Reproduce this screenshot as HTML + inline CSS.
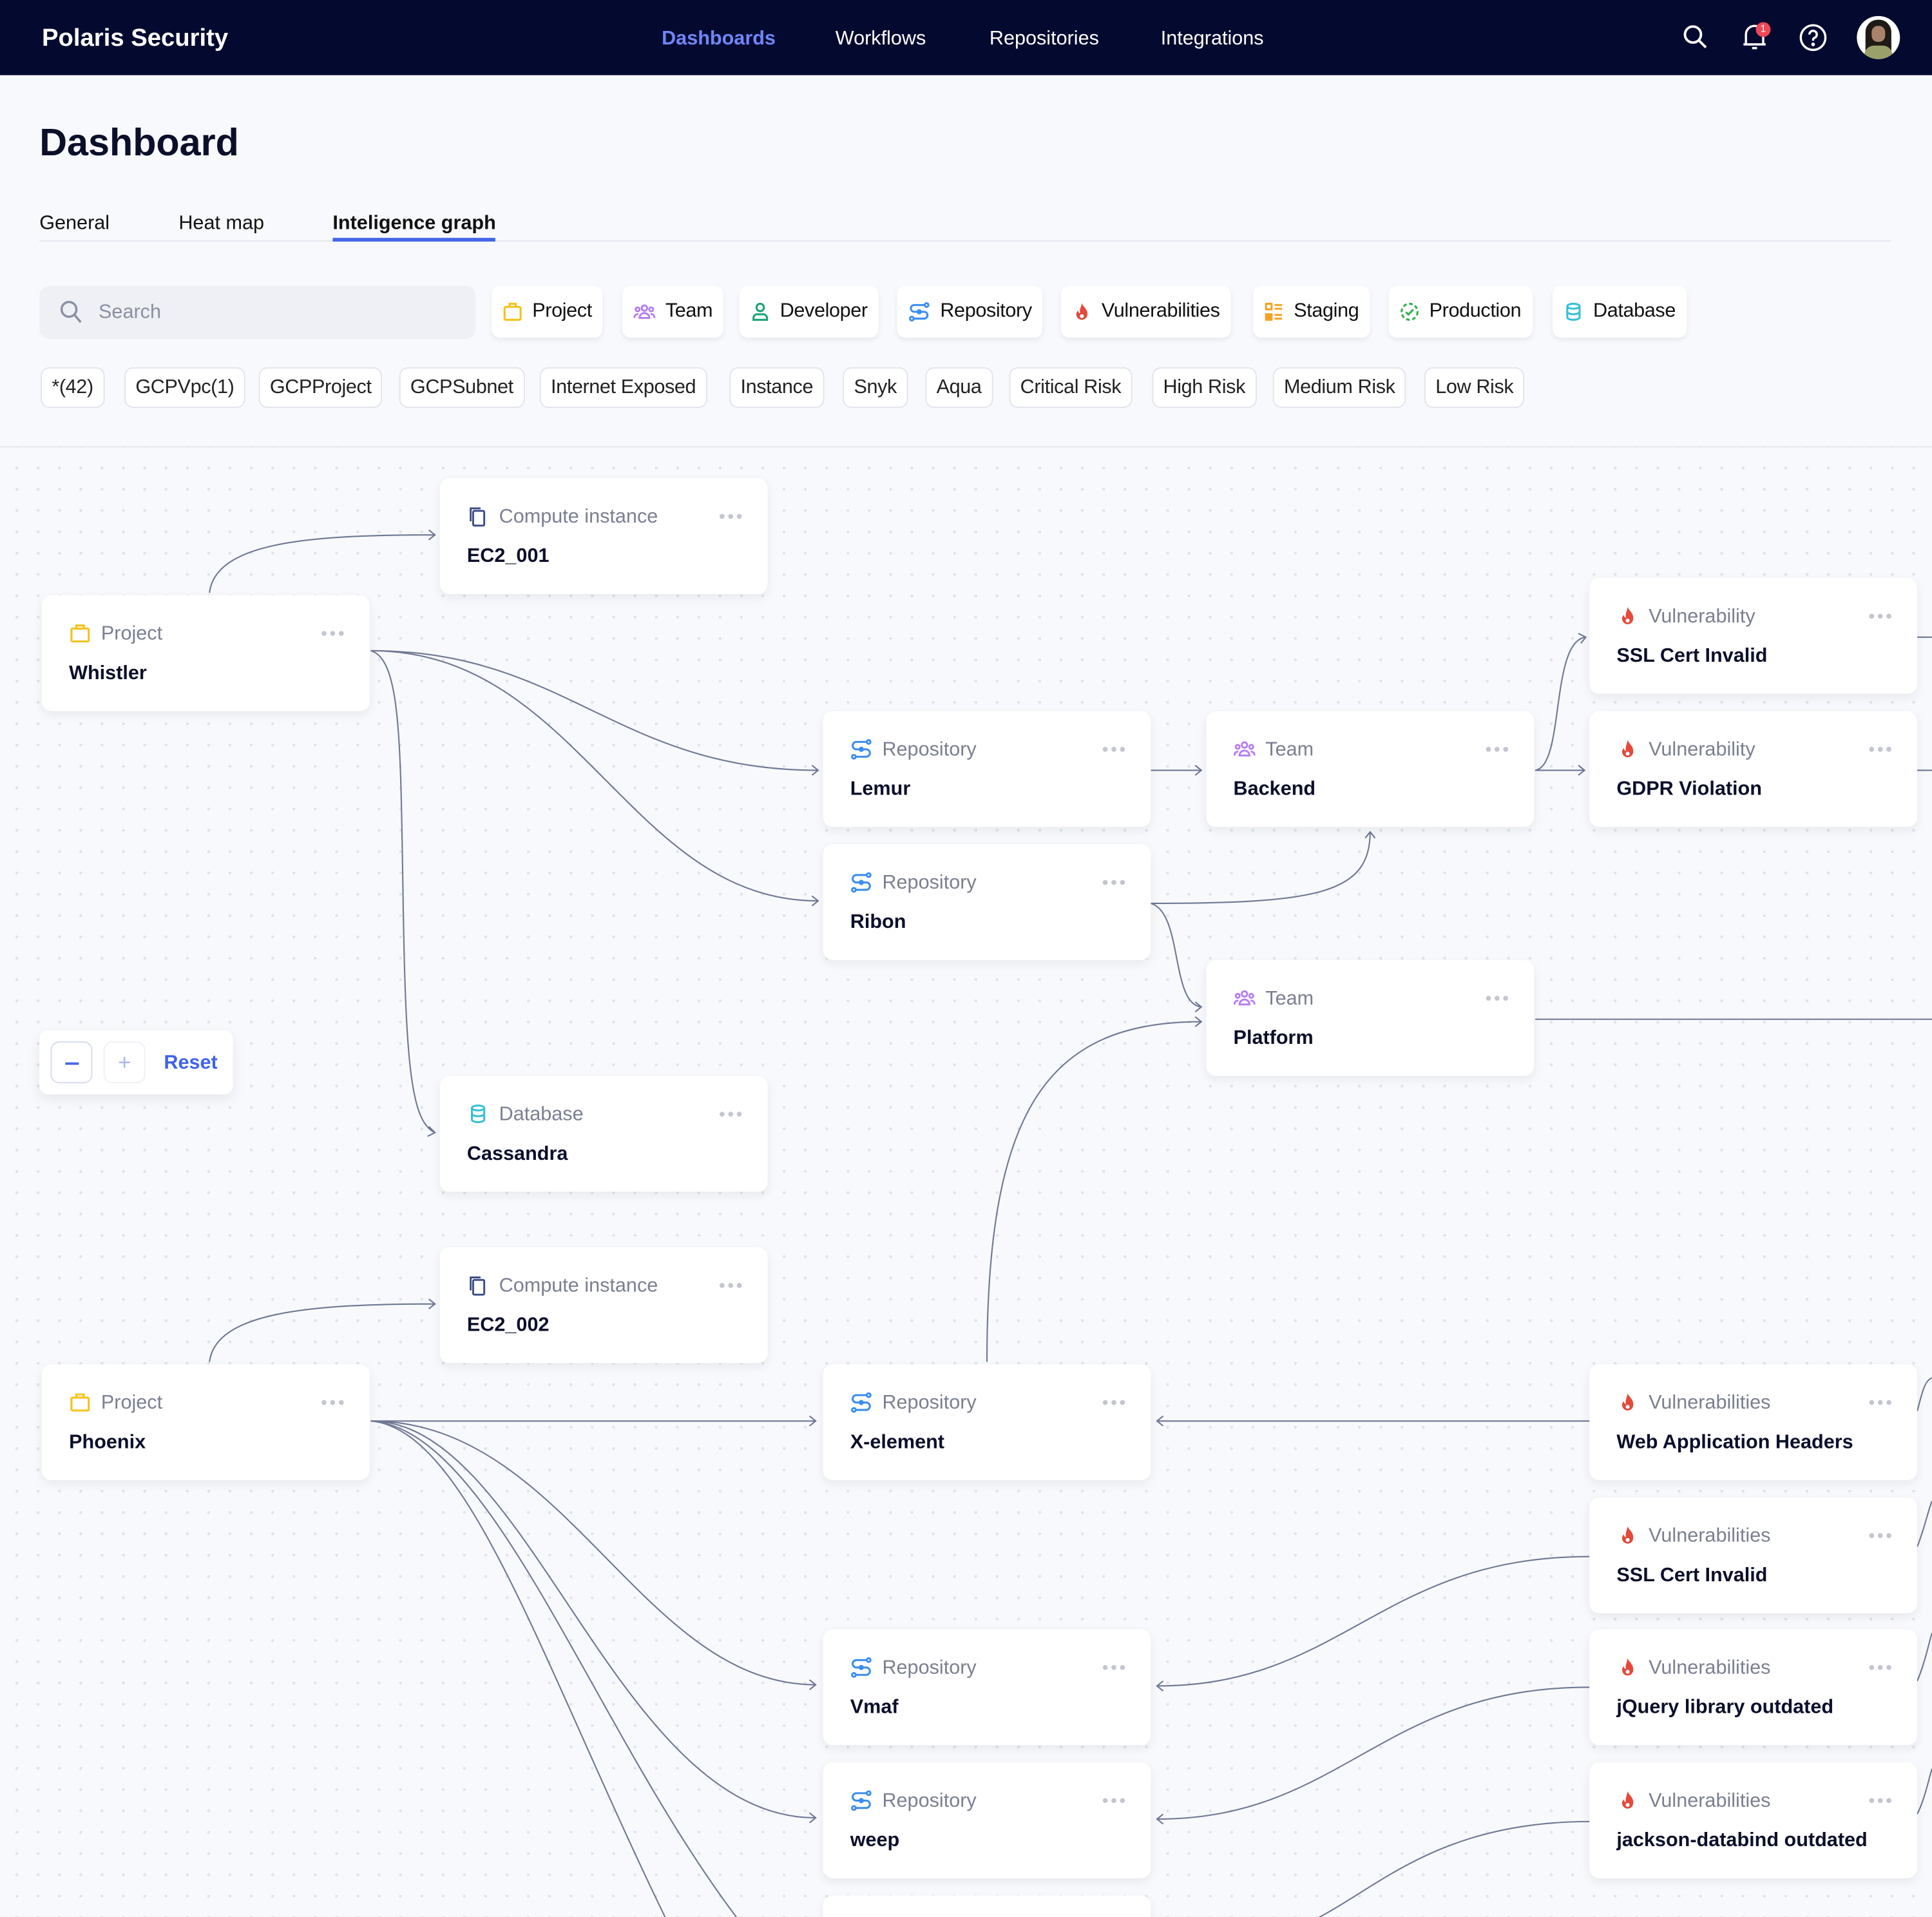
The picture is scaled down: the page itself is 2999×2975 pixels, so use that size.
<!DOCTYPE html>
<html><head><meta charset="utf-8">
<style>
*{box-sizing:border-box;margin:0;padding:0}
html,body{width:2999px;height:2975px;overflow:hidden;background:#f8f9fc}
#w{width:1568px;height:1556px;transform:scale(1.91263);transform-origin:0 0;position:relative;font-family:"Liberation Sans",sans-serif;color:#0b0f2a;overflow:hidden;background:#f8f9fc}
.top{position:absolute;left:0;top:0;width:1568px;height:61px;background:#040a2f}
.logo{position:absolute;left:34px;top:20px;color:#fff;font-weight:bold;font-size:20px}
.nav{position:absolute;top:23px;color:#fff;font-size:16px}
h1{position:absolute;left:32px;top:98px;font-size:31px;font-weight:bold;color:#0b0f2a}
.tab{position:absolute;top:173px;font-size:16px;color:#111}
.tabline{position:absolute;left:32px;top:195px;width:1503px;height:1px;background:#e3e5ee}
.chip{position:absolute;top:232px;height:42px;background:#fff;border-radius:7px;box-shadow:0 2px 4px rgba(20,30,60,.07);font-size:16px;display:flex;align-items:center;padding:0 9px;gap:8px;color:#111;letter-spacing:-0.2px}
.tag{position:absolute;top:298px;height:33px;background:#fff;border:1px solid #e2e4ee;border-radius:7px;font-size:16px;display:flex;align-items:center;padding:0 8px;color:#222;letter-spacing:-0.2px}
.search{position:absolute;left:32px;top:232px;width:354px;height:43px;background:#eff0f5;border-radius:8px}
.canvas{position:absolute;left:0;top:362px;width:1568px;height:1194px;border-top:1px solid #e6e8ef;background-color:#f8f9fc;background-image:radial-gradient(circle,#dfe2ea 1px,transparent 1.3px);background-size:17.3px 17.3px;background-position:5px 8px}
.card{position:absolute;width:266px;height:94px;background:#fff;border-radius:8px;box-shadow:0 3px 8px rgba(20,30,60,.07)}
.card .l{position:absolute;left:48px;top:23px;font-size:16px;color:#7b7f91}
.card .n{position:absolute;left:22px;top:55px;font-size:16px;font-weight:bold;color:#0b0f2a}
.card .ic{position:absolute;left:22px;top:22px;width:18px;height:18px}
.card .d{position:absolute;left:226px;top:28px;width:20px;height:6px}
svg{overflow:visible}
</style></head><body><div id="w">
<div class="top">
<div class="logo">Polaris Security</div>
<div class="nav" style="left:537px;color:#6f86f7;font-weight:bold">Dashboards</div>
<div class="nav" style="left:678px">Workflows</div>
<div class="nav" style="left:803px">Repositories</div>
<div class="nav" style="left:942px">Integrations</div>
<svg style="position:absolute;left:1365px;top:19px" width="22" height="22" viewBox="0 0 22 22" fill="none" stroke="#fff" stroke-width="2"><circle cx="9" cy="9" r="6.5"/><path d="M14 14l5.5 5.5"/></svg>
<svg style="position:absolute;left:1413px;top:18px" width="22" height="24" viewBox="0 0 22 24" fill="none" stroke="#fff" stroke-width="1.8"><path d="M4 18V10a7 7 0 0 1 14 0v8zM2 18h18M9 21h4"/></svg>
<div style="position:absolute;left:1425px;top:18px;width:12px;height:12px;border-radius:6px;background:#f04758;color:#fff;font-size:8px;text-align:center;line-height:12px">1</div>
<svg style="position:absolute;left:1460px;top:19px" width="23" height="23" viewBox="0 0 23 23" fill="none" stroke="#fff" stroke-width="1.8"><circle cx="11.5" cy="11.5" r="10"/><path d="M8.5 9a3 3 0 1 1 4 2.8c-1 .4-1 1.2-1 2.2"/><circle cx="11.5" cy="17" r=".6" fill="#fff"/></svg>
<div style="position:absolute;left:1507px;top:13px;width:35px;height:35px;border-radius:50%;background:#fff;overflow:hidden"><div style="position:absolute;left:7px;top:3px;width:21px;height:30px;border-radius:10px 10px 4px 4px;background:#1e1a16"></div><div style="position:absolute;left:12px;top:8px;width:11px;height:13px;border-radius:5px;background:#a9826a"></div><div style="position:absolute;left:6px;top:24px;width:23px;height:14px;border-radius:8px 8px 0 0;background:#9aa06a"></div></div>
</div>
<h1>Dashboard</h1>
<div class="tab" style="left:32px">General</div>
<div class="tab" style="left:145px">Heat map</div>
<div class="tab" style="left:270px;font-weight:bold">Inteligence graph</div>
<div class="tabline"></div>
<div style="position:absolute;left:270px;top:193px;width:132px;height:3px;background:#4466e8"></div>
<div class="search"><svg style="position:absolute;left:16px;top:11px" width="20" height="22" viewBox="0 0 20 22" fill="none" stroke="#8a8fa3" stroke-width="1.8"><circle cx="8" cy="8" r="6"/><path d="M12.5 12.5l5 6"/></svg><span style="position:absolute;left:48px;top:13px;font-size:16px;color:#8b8fa0">Search</span></div>
<div class="chip" style="left:399px"><svg width="16" height="16" viewBox="0 0 16 16" fill="none" stroke="#f3c21b" stroke-width="1.6"><rect x="1.5" y="4" width="13" height="10.5" rx="1"/><path d="M5.5 4V1.5h5V4"/></svg>Project</div>
<div class="chip" style="left:505px"><svg width="18" height="16" viewBox="0 0 18 16" fill="none" stroke="#b57cf2" stroke-width="1.5"><circle cx="9" cy="5" r="2.2"/><circle cx="3.5" cy="6" r="1.6"/><circle cx="14.5" cy="6" r="1.6"/><path d="M5 13a4 4 0 0 1 8 0zM1 13a2.5 2.5 0 0 1 3-3M17 13a2.5 2.5 0 0 0-3-3"/></svg>Team</div>
<div class="chip" style="left:600px"><svg width="16" height="16" viewBox="0 0 16 16" fill="none" stroke="#1aa474" stroke-width="1.6"><circle cx="8" cy="4.5" r="3"/><path d="M2.5 14.5v-1.5a3 3 0 0 1 3-3h5a3 3 0 0 1 3 3v1.5z"/></svg>Developer</div>
<div class="chip" style="left:728px"><svg width="18" height="16" viewBox="0 0 18 16" fill="none" stroke="#3b8df0" stroke-width="1.6"><circle cx="15" cy="2.5" r="1.5"/><circle cx="3" cy="13.5" r="1.5"/><circle cx="9" cy="8" r="1.3" fill="#3b8df0"/><path d="M13.5 2.5H5a2.7 2.7 0 0 0 0 5.5h8a2.7 2.7 0 0 1 0 5.5H4.5"/></svg>Repository</div>
<div class="chip" style="left:861px"><svg width="16" height="16" viewBox="0 0 16 16"><path d="M8 1c1 3 5 5 4.5 9A4.5 4.5 0 0 1 3.5 10c0-2 1.5-3 1.5-3 0 1.5 1 2.5 1.5 2C6 6 7.5 4 8 1z" fill="#e4493a"/><circle cx="8" cy="11.5" r="1.6" fill="#fff"/></svg>Vulnerabilities</div>
<div class="chip" style="left:1017px"><svg width="16" height="16" viewBox="0 0 16 16" fill="none" stroke="#f5a223" stroke-width="1.6"><rect x="1.5" y="1.5" width="4.5" height="4.5"/><rect x="1.5" y="10" width="4.5" height="4.5" fill="#f5a223"/><path d="M8.5 2.5h6M8.5 5.5h6M8.5 10.5h6M8.5 13.5h6"/></svg>Staging</div>
<div class="chip" style="left:1127px"><svg width="16" height="16" viewBox="0 0 16 16" fill="none" stroke="#2fae4a" stroke-width="1.6"><circle cx="8" cy="8" r="6.5" stroke-dasharray="3 2"/><path d="M5 8.2l2 2 4-4"/></svg>Production</div>
<div class="chip" style="left:1260px"><svg width="16" height="16" viewBox="0 0 16 16" fill="none" stroke="#35c0d6" stroke-width="1.6"><ellipse cx="8" cy="3.5" rx="5" ry="2"/><path d="M3 3.5v9c0 1.1 2.2 2 5 2s5-.9 5-2v-9M3 8c0 1.1 2.2 2 5 2s5-.9 5-2"/></svg>Database</div>
<div class="tag" style="left:33px">*(42)</div>
<div class="tag" style="left:101px">GCPVpc(1)</div>
<div class="tag" style="left:210px">GCPProject</div>
<div class="tag" style="left:324px">GCPSubnet</div>
<div class="tag" style="left:438px">Internet Exposed</div>
<div class="tag" style="left:592px">Instance</div>
<div class="tag" style="left:684px">Snyk</div>
<div class="tag" style="left:751px">Aqua</div>
<div class="tag" style="left:819px">Critical Risk</div>
<div class="tag" style="left:935px">High Risk</div>
<div class="tag" style="left:1033px">Medium Risk</div>
<div class="tag" style="left:1156px">Low Risk</div>
<div class="canvas"></div>
<svg style="position:absolute;left:0;top:0" width="1568" height="1556" fill="none" stroke="#6f7794" stroke-width="1.1">
<path d="M170 481C175 440 250 434 353 434M348 430l5 4-5 4"/>
<path d="M301 528C460 528 500 625 664 625M659 621l5 4-5 4"/>
<path d="M301 528C470 528 510 731 664 731M659 727l5 4-5 4"/>
<path d="M301 528C325 535 325 600 327 720C329 860 333 910 353 919M348 914l5 5-6 3"/>
<path d="M934 625H975M970 621l5 4-5 4"/>
<path d="M1246 625C1270 622 1258 520 1287 517M1281 514l6 3-4 5"/>
<path d="M1246 625H1286M1281 621l5 4-5 4"/>
<path d="M934 733C1070 733 1112 725 1112 675M1108 680l4-5 4 5"/>
<path d="M934 733C960 740 950 815 975 817M970 813l5 4-5 4"/>
<path d="M801 1105C801 900 850 829 975 829M970 825l5 4-5 4"/>
<path d="M1246 827H1568"/>
<path d="M1556 517H1568M1556 625H1568"/>
<path d="M170 1105C175 1065 250 1058 353 1058M348 1054l5 4-5 4"/>
<path d="M301 1153H662M657 1149l5 4-5 4"/>
<path d="M301 1153C460 1153 520 1367 662 1367M657 1363l5 4-5 4"/>
<path d="M301 1153C430 1153 500 1475 662 1475M657 1471l5 4-5 4"/>
<path d="M301 1153C400 1160 480 1400 598 1556"/>
<path d="M301 1153C380 1160 440 1350 540 1556"/>
<path d="M1290 1153H939M944 1149l-5 4 5 4"/>
<path d="M1290 1263C1120 1263 1090 1368 939 1368M944 1364l-5 4 5 4"/>
<path d="M1290 1369C1120 1369 1090 1476 939 1476M944 1472l-5 4 5 4"/>
<path d="M1290 1478C1170 1478 1120 1530 1070 1556"/>
<path d="M1556 1145C1560 1130 1562 1120 1568 1118M1556 1255C1562 1240 1565 1225 1568 1218M1556 1364C1562 1350 1565 1335 1568 1325M1556 1472C1562 1460 1565 1445 1568 1435"/>
</svg>
<div id="cards"></div>
<div style="position:absolute;left:32px;top:836px;width:157px;height:52px;background:#fff;border-radius:7px;box-shadow:0 4px 10px rgba(20,30,60,.08)">
<div style="position:absolute;left:9px;top:9px;width:34px;height:34px;border:1px solid #d8dcf0;border-radius:7px"><div style="position:absolute;left:11px;top:16px;width:11px;height:2px;background:#4466e8"></div></div>
<div style="position:absolute;left:52px;top:9px;width:34px;height:34px;border:1px solid #f0f1f6;border-radius:7px;color:#a8b6f5;font-size:18px;text-align:center;line-height:32px">+</div>
<div style="position:absolute;left:101px;top:18px;font-size:16px;font-weight:bold;color:#3f63ea">Reset</div>
</div>
<script>
var I={
c:'<svg viewBox="0 0 18 18" fill="none" stroke="#3a4a86" stroke-width="1.5"><rect x="5" y="4.5" width="9" height="12" rx="1"/><path d="M3 13V2.5h8"/></svg>',
p:'<svg viewBox="0 0 18 18" fill="none" stroke="#f3c21b" stroke-width="1.6"><rect x="2" y="5" width="14" height="10.5" rx="1"/><path d="M6 5V2.5h6V5"/></svg>',
r:'<svg viewBox="0 0 18 18" fill="none" stroke="#3b8df0" stroke-width="1.6"><circle cx="15" cy="3" r="1.5"/><circle cx="3" cy="15" r="1.5"/><circle cx="9" cy="9" r="1.3" fill="#3b8df0"/><path d="M13.5 3H5a3 3 0 0 0 0 6h8a3 3 0 0 1 0 6H4.5"/></svg>',
t:'<svg viewBox="0 0 18 18" fill="none" stroke="#b57cf2" stroke-width="1.5"><circle cx="9" cy="5.5" r="2.2"/><circle cx="3.5" cy="7" r="1.6"/><circle cx="14.5" cy="7" r="1.6"/><path d="M5 14a4 4 0 0 1 8 0zM1 14a2.5 2.5 0 0 1 3-3M17 14a2.5 2.5 0 0 0-3-3"/></svg>',
v:'<svg viewBox="0 0 18 18"><path d="M9 1.5c1 3 5 5 4.5 9.5A4.5 4.5 0 0 1 4.5 11c0-2 1.5-3 1.5-3 0 1.5 1 2.5 1.5 2C7 7 8.5 4.5 9 1.5z" fill="#e4493a"/><circle cx="9" cy="12.5" r="1.6" fill="#fff"/></svg>',
d:'<svg viewBox="0 0 18 18" fill="none" stroke="#35c0d6" stroke-width="1.6"><ellipse cx="9" cy="4" rx="5" ry="2"/><path d="M4 4v9.5c0 1.1 2.2 2 5 2s5-.9 5-2V4M4 8.7c0 1.1 2.2 2 5 2s5-.9 5-2"/></svg>'};
var C=[[357,388,'c','Compute instance','EC2_001'],[34,483,'p','Project','Whistler'],[1290,469,'v','Vulnerability','SSL Cert Invalid'],[668,577,'r','Repository','Lemur'],[979,577,'t','Team','Backend'],[1290,577,'v','Vulnerability','GDPR Violation'],[668,685,'r','Repository','Ribon'],[979,779,'t','Team','Platform'],[357,873,'d','Database','Cassandra'],[357,1012,'c','Compute instance','EC2_002'],[34,1107,'p','Project','Phoenix'],[668,1107,'r','Repository','X-element'],[1290,1107,'v','Vulnerabilities','Web Application Headers'],[1290,1215,'v','Vulnerabilities','SSL Cert Invalid'],[668,1322,'r','Repository','Vmaf'],[1290,1322,'v','Vulnerabilities','jQuery library outdated'],[668,1430,'r','Repository','weep'],[1290,1430,'v','Vulnerabilities','jackson-databind outdated'],[668,1538,'r','','']];
var h='';C.forEach(function(c){h+='<div class="card" style="left:'+c[0]+'px;top:'+c[1]+'px">'+(c[3]?'<div class="ic">'+I[c[2]]+'</div><div class="l">'+c[3]+'</div><div class="n">'+c[4]+'</div><svg class="d" viewBox="0 0 20 6"><circle cx="3" cy="3" r="2" fill="#c3c6d1"/><circle cx="10" cy="3" r="2" fill="#c3c6d1"/><circle cx="17" cy="3" r="2" fill="#c3c6d1"/></svg>':'')+'</div>'});
document.getElementById('cards').innerHTML=h;
</script>
</div></body></html>
